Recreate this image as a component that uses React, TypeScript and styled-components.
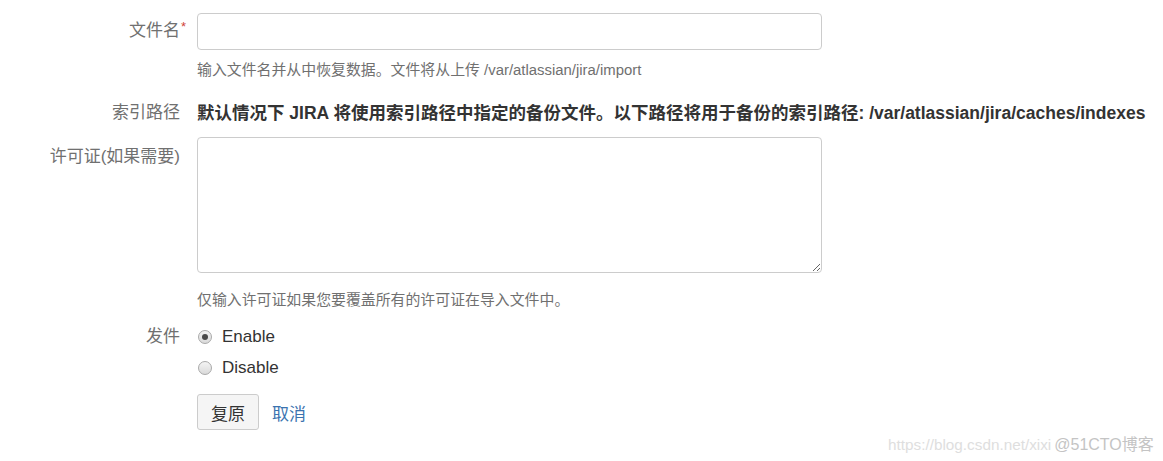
import React, { useState } from 'react';
import styled, { createGlobalStyle } from 'styled-components';

const GlobalStyle = createGlobalStyle`
  html, body {
    margin: 0;
    padding: 0;
    background: #fff;
  }
  body {
    font-family: "Liberation Sans", Arial, "Noto Sans CJK SC", sans-serif;
    color: #333;
  }
`;

const Page = styled.div`
  position: relative;
  width: 1163px;
  height: 461px;
  overflow: hidden;
  padding-top: 13px;
  box-sizing: border-box;
`;

const Form = styled.form`
  display: grid;
  grid-template-columns: 180px 625px;
  column-gap: 17px;
`;

const Label = styled.div<{ $top?: number; $mt?: number }>`
  text-align: right;
  font-size: 17px;
  line-height: 24px;
  color: #707070;
  margin-top: ${({ $mt }) => $mt ?? 0}px;
  padding-top: ${({ $top }) => $top ?? 0}px;
  white-space: nowrap;
`;

const Required = styled.span`
  color: #d04437;
  font-size: 13px;
  vertical-align: top;
  line-height: 16px;
  margin-left: 1px;
  margin-right: -6px;
`;

const Field = styled.div<{ $mt?: number }>`
  display: flex;
  flex-direction: column;
  margin-top: ${({ $mt }) => $mt ?? 0}px;
`;

const TextInput = styled.input`
  box-sizing: border-box;
  width: 625px;
  height: 37px;
  border: 1px solid #ccc;
  border-radius: 4px;
  padding: 6px 10px;
  font-size: 16px;
  font-family: inherit;
  outline: none;
`;

const TextArea = styled.textarea`
  box-sizing: border-box;
  width: 625px;
  height: 136px;
  border: 1px solid #ccc;
  border-radius: 4px;
  padding: 6px 10px;
  font-size: 16px;
  font-family: inherit;
  resize: vertical;
  display: block;
  outline: none;
`;

const Help = styled.div<{ $mt: number }>`
  margin-top: ${({ $mt }) => $mt}px;
  font-size: 14.9px;
  line-height: 20px;
  color: #707070;
  white-space: nowrap;
`;

const Strong = styled.div`
  font-size: 17.5px;
  line-height: 24px;
  font-weight: bold;
  color: #333;
  white-space: nowrap;
`;

const RadioList = styled.div`
  display: flex;
  flex-direction: column;
  gap: 7px;
`;

const RadioRow = styled.label`
  display: flex;
  align-items: center;
  gap: 10px;
  font-size: 17px;
  line-height: 24px;
  color: #333;
  cursor: pointer;
  padding-left: 1px;
`;

const RadioDot = styled.span<{ $checked: boolean }>`
  position: relative;
  width: 14px;
  height: 14px;
  box-sizing: border-box;
  border-radius: 50%;
  border: 1px solid #a9a9a9;
  background: linear-gradient(#f4f4f4, #dadada);
  &::after {
    content: '';
    display: ${({ $checked }) => ($checked ? 'block' : 'none')};
    position: absolute;
    left: 3px;
    top: 3px;
    width: 6px;
    height: 6px;
    border-radius: 50%;
    background: #4a4a4a;
  }
`;

const Actions = styled.div`
  display: flex;
  align-items: center;
  gap: 13px;
  margin-top: 14px;
`;

const Button = styled.button`
  height: 36px;
  padding: 0 13px;
  font-family: inherit;
  font-size: 17px;
  color: #333;
  background: #f5f5f5;
  border: 1px solid #ccc;
  border-radius: 3px;
  cursor: pointer;
`;

const CancelLink = styled.a`
  font-size: 17px;
  color: #3b73af;
  text-decoration: none;
  cursor: pointer;
`;

const Watermark = styled.div`
  position: absolute;
  left: 888px;
  top: 431px;
  display: flex;
  align-items: baseline;
  font-size: 15.3px;
  white-space: nowrap;
`;

const WatermarkUrl = styled.span`
  color: #dedede;
`;

const WatermarkBrand = styled.span`
  color: #c4c4c4;
  font-size: 16px;
  margin-left: 3px;
`;

export default function App() {
  const [mail, setMail] = useState<'enable' | 'disable'>('enable');

  return (
    <Page>
      <GlobalStyle />
      <Form onSubmit={(e) => e.preventDefault()}>
        <Label $top={6}>
          文件名<Required>*</Required>
        </Label>
        <Field>
          <TextInput type="text" />
          <Help $mt={10}>输入文件名并从中恢复数据。文件将从上传 /var/atlassian/jira/import</Help>
        </Field>

        <Label $mt={21}>索引路径</Label>
        <Field $mt={21}>
          <Strong>默认情况下 JIRA 将使用索引路径中指定的备份文件。以下路径将用于备份的索引路径: /var/atlassian/jira/caches/indexes</Strong>
        </Field>

        <Label $mt={12} $top={8}>许可证(如果需要)</Label>
        <Field $mt={12}>
          <TextArea />
          <Help $mt={17}>仅输入许可证如果您要覆盖所有的许可证在导入文件中。</Help>
        </Field>

        <Label $mt={15}>发件</Label>
        <Field $mt={15}>
          <RadioList>
            <RadioRow onClick={() => setMail('enable')}>
              <RadioDot $checked={mail === 'enable'} />
              Enable
            </RadioRow>
            <RadioRow onClick={() => setMail('disable')}>
              <RadioDot $checked={mail === 'disable'} />
              Disable
            </RadioRow>
          </RadioList>
          <Actions>
            <Button type="submit">复原</Button>
            <CancelLink>取消</CancelLink>
          </Actions>
        </Field>
      </Form>
      <Watermark>
        <WatermarkUrl>https://blog.csdn.net/xixi</WatermarkUrl>
        <WatermarkBrand>@51CTO博客</WatermarkBrand>
      </Watermark>
    </Page>
  );
}
